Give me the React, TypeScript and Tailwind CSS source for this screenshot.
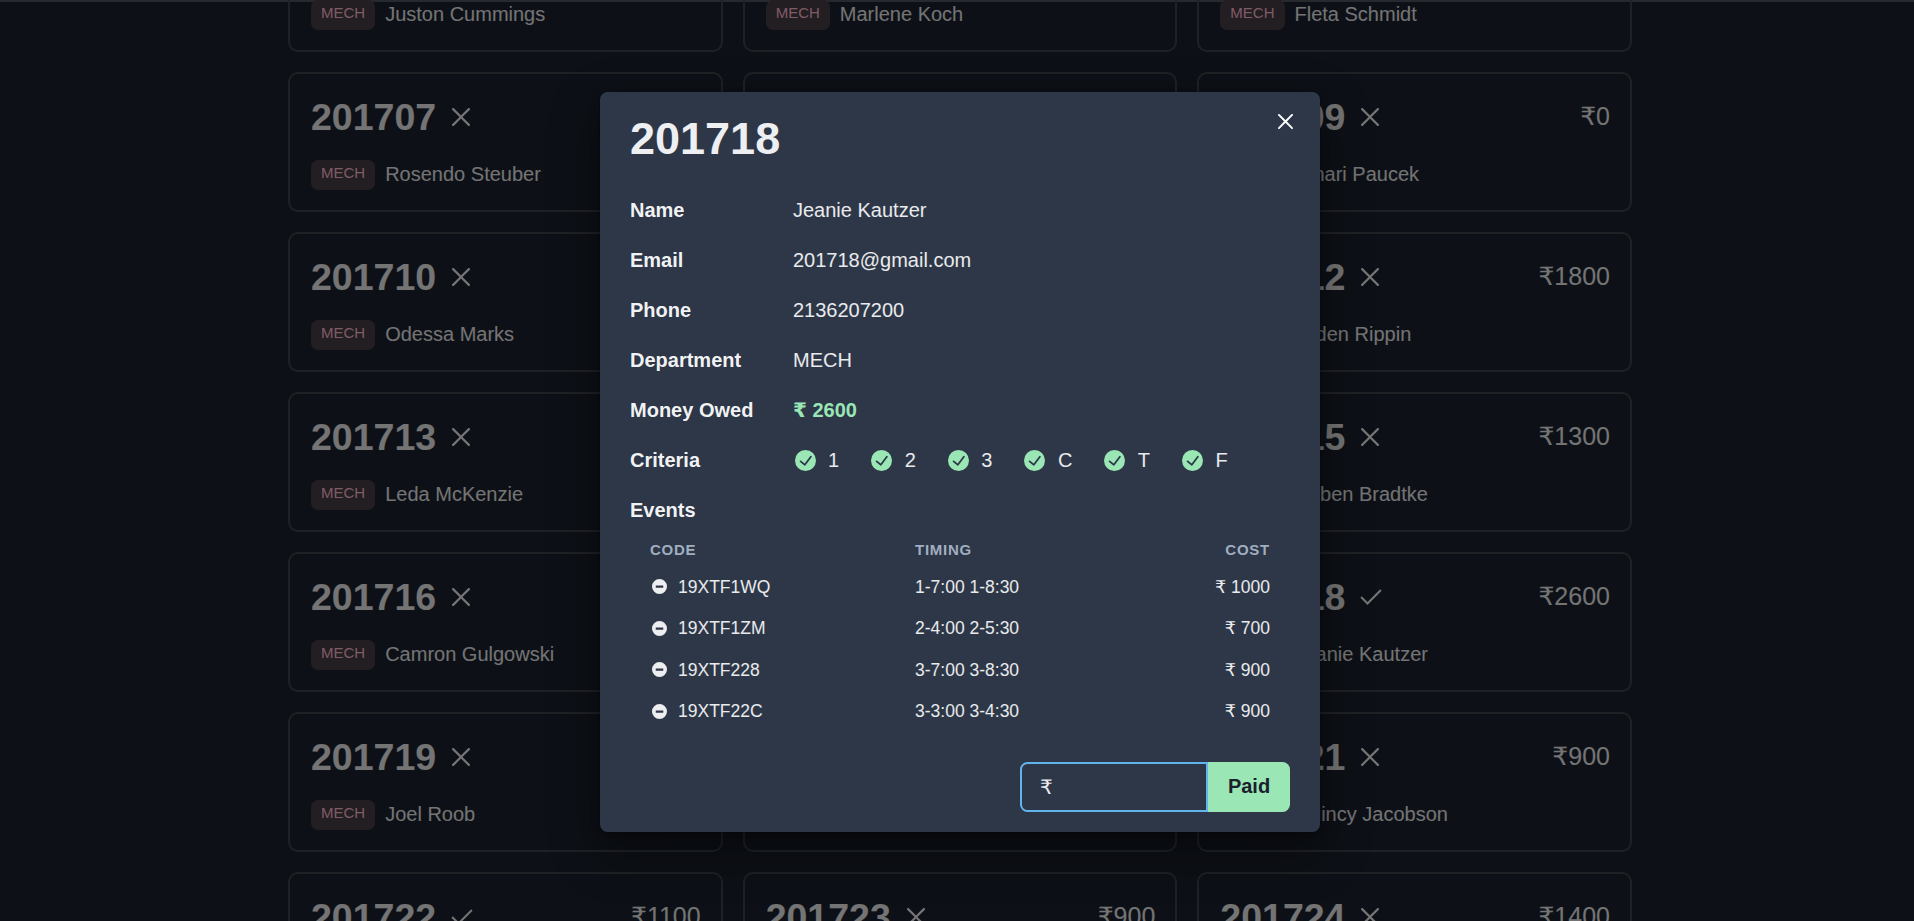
const students = [
  { id: "201704", name: "Juston Cummings", paid: false, owed: 800 },
  { id: "201705", name: "Marlene Koch", paid: false, owed: 700 },
  { id: "201706", name: "Fleta Schmidt", paid: false, owed: 1000 },
  { id: "201707", name: "Rosendo Steuber", paid: false, owed: 900 },
  { id: "201708", name: "Alena Hoppe", paid: false, owed: 1200 },
  { id: "201709", name: "Dinari Paucek", paid: false, owed: 0 },
  { id: "201710", name: "Odessa Marks", paid: false, owed: 1600 },
  { id: "201711", name: "Kory Lind", paid: false, owed: 700 },
  { id: "201712", name: "Jaden Rippin", paid: false, owed: 1800 },
  { id: "201713", name: "Leda McKenzie", paid: false, owed: 1000 },
  { id: "201714", name: "Ivah Walsh", paid: false, owed: 900 },
  { id: "201715", name: "Ruben Bradtke", paid: false, owed: 1300 },
  { id: "201716", name: "Camron Gulgowski", paid: false, owed: 2000 },
  { id: "201717", name: "Tia Bauch", paid: false, owed: 800 },
  { id: "201718", name: "Jeanie Kautzer", paid: true, owed: 2600 },
  { id: "201719", name: "Joel Roob", paid: false, owed: 1100 },
  { id: "201720", name: "Nola Kirlin", paid: false, owed: 500 },
  { id: "201721", name: "Quincy Jacobson", paid: false, owed: 900 },
  { id: "201722", name: "Mabel Hane", paid: true, owed: 1100 },
  { id: "201723", name: "Dale Frami", paid: false, owed: 900 },
  { id: "201724", name: "Ross Lowe", paid: false, owed: 1400 },
];

const events = [
  { code: "19XTF1WQ", timing: "1-7:00 1-8:30", cost: 1000 },
  { code: "19XTF1ZM", timing: "2-4:00 2-5:30", cost: 700 },
  { code: "19XTF228", timing: "3-7:00 3-8:30", cost: 900 },
  { code: "19XTF22C", timing: "3-3:00 3-4:30", cost: 900 },
];

const details = [
  ["Name", "Jeanie Kautzer"],
  ["Email", "201718@gmail.com"],
  ["Phone", "2136207200"],
  ["Department", "MECH"],
];

function Rupee() {
  return <span className="font-['DejaVu_Sans',sans-serif]">₹</span>;
}

function CloseIcon({ className }: { className: string }) {
  return (
    <svg viewBox="0 0 24 24" className={className} fill="currentColor">
      <path d="M.439,21.44a1.5,1.5,0,0,0,2.122,2.121L11.823,14.3a.25.25,0,0,1,.354,0l9.262,9.263a1.5,1.5,0,1,0,2.122-2.121L14.3,12.177a.25.25,0,0,1,0-.354l9.263-9.262A1.5,1.5,0,0,0,21.439.44L12.177,9.7a.25.25,0,0,1-.354,0L2.561.44A1.5,1.5,0,0,0,.439,2.561L9.7,11.823a.25.25,0,0,1,0,.354Z" />
    </svg>
  );
}

function CheckIcon({ className }: { className: string }) {
  return (
    <svg viewBox="0 0 24 24" className={className} fill="currentColor">
      <polygon points="8.2 20.6 0.4 12.8 2 11.2 8.2 17.4 22 3.6 23.6 5.2" />
    </svg>
  );
}

function CheckCircle() {
  return (
    <svg viewBox="0 0 24 24" className="w-[21px] h-[21px] shrink-0 text-[#9ae6b4]" fill="currentColor">
      <path d="M12,0A12,12,0,1,0,24,12,12.014,12.014,0,0,0,12,0Zm6.927,8.2-6.845,9.289a1.011,1.011,0,0,1-1.43.188L5.764,13.769a1,1,0,1,1,1.25-1.562l4.076,3.261,6.227-8.451A1,1,0,1,1,18.927,8.2Z" />
    </svg>
  );
}

function MinusCircle() {
  return (
    <svg viewBox="0 0 24 24" className="w-[15px] h-[15px] shrink-0 text-[#edeef0]" fill="currentColor">
      <path fillRule="evenodd" d="M12 0a12 12 0 1 0 0 24 12 12 0 0 0 0-24ZM6 10.2h12v3.6H6Z" />
    </svg>
  );
}

function StudentCard({ id, name, paid, owed }: (typeof students)[number]) {
  return (
    <div className="h-[140px] border-2 border-[#3e424a] rounded-[10px] pl-[21px] pr-5 py-5">
      <div className="flex items-center justify-between h-[46px] mb-5">
        <div className="flex items-center">
          <span className="text-[37.5px] font-bold">{id}</span>
          {paid ? (
            <CheckIcon className="ml-[15px] w-[22px] h-[22px]" />
          ) : (
            <CloseIcon className="ml-4 w-[18px] h-[18px]" />
          )}
        </div>
        <span className="text-[25px]">
          <Rupee />
          {owed}
        </span>
      </div>
      <div className="flex items-center">
        <span className="h-[30px] px-2.5 rounded-[7px] bg-[#453c42] text-[#fbb6ce] text-[15px] leading-[26px]">MECH</span>
        <span className="ml-2.5 mb-0.5 text-[20px] leading-5">{name}</span>
      </div>
    </div>
  );
}

export default function App() {
  return (
    <div className="relative h-[921px] overflow-hidden bg-[#1a202c] text-white/90 font-['Liberation_Sans',Arial,sans-serif]">
      <div className="h-0.5 bg-[#4d525c]" />
      <div className="-mt-[90px] ml-[288px] w-[1344px] grid grid-cols-3 gap-5">
        {students.map((s) => (
          <StudentCard key={s.id} {...s} />
        ))}
      </div>

      {/* modal overlay */}
      <div className="absolute inset-0 bg-black/50">
        <div className="absolute left-[600px] top-[92px] w-[720px] h-[740px] bg-[#2d3748] rounded-[7.5px] px-[30px] pt-[30px] shadow-[0_0_0_1px_rgba(0,0,0,0.1),0_6px_12px_rgba(0,0,0,0.2),0_19px_50px_rgba(0,0,0,0.4)]">
          <button className="absolute top-[19px] right-[25px] w-[20px] h-[20px] flex items-center justify-center text-white">
            <CloseIcon className="w-[15px] h-[15px]" />
          </button>

          <h2 className="text-[45px] leading-[34px] font-bold text-[#edeff2] mb-[29px]">201718</h2>

          {details.map(([label, value]) => (
            <div key={label} className="flex items-center h-[50px] text-[20px]">
              <span className="w-[163px] font-bold text-white/95">{label}</span>
              <span>{value}</span>
            </div>
          ))}
          <div className="flex items-center h-[50px] text-[20px]">
            <span className="w-[163px] font-bold text-white/95">Money Owed</span>
            <span className="font-bold text-[#9ae6b4]">
              <Rupee /> 2600
            </span>
          </div>
          <div className="flex items-center h-[50px] text-[20px]">
            <span className="w-[163px] font-bold text-white/95">Criteria</span>
            <div className="flex items-center gap-8 pl-[1.5px]">
              {["1", "2", "3", "C", "T", "F"].map((c) => (
                <div key={c} className="flex items-center gap-[12.5px]">
                  <CheckCircle />
                  <span>{c}</span>
                </div>
              ))}
            </div>
          </div>
          <div className="flex items-center h-[50px] text-[20px] font-bold text-white/95">Events</div>

          <table className="w-[660px] table-fixed border-collapse text-[17.5px]">
            <thead>
              <tr className="h-[31px] text-[15px] font-bold tracking-[0.05em] text-[#a0aec0] uppercase">
                <th className="w-[265px] pl-5 text-left">Code</th>
                <th className="pl-5 text-left">Timing</th>
                <th className="w-[200px] pr-5 text-right">Cost</th>
              </tr>
            </thead>
            <tbody>
              {events.map((e) => (
                <tr key={e.code} className="h-[41.5px]">
                  <td className="pl-5">
                    <div className="flex items-center gap-[11.5px] pl-[1.5px]">
                      <MinusCircle />
                      <span>{e.code}</span>
                    </div>
                  </td>
                  <td className="pl-5">{e.timing}</td>
                  <td className="pr-5 text-right">
                    <Rupee /> {e.cost}
                  </td>
                </tr>
              ))}
            </tbody>
          </table>

          <div className="flex justify-end mt-[30px]">
            <div className="flex items-center w-[188px] h-[50px] border-2 border-[#63b3ed] rounded-l-[7.5px] px-[18px] text-[20px]">
              <Rupee />
              <input className="ml-2 min-w-0 flex-1 bg-transparent outline-none" />
            </div>
            <button className="h-[50px] w-[82px] pb-0.5 rounded-r-[7.5px] bg-[#9ae6b4] text-[#1a202c] text-[20px] font-bold">Paid</button>
          </div>
        </div>
      </div>
    </div>
  );
}
